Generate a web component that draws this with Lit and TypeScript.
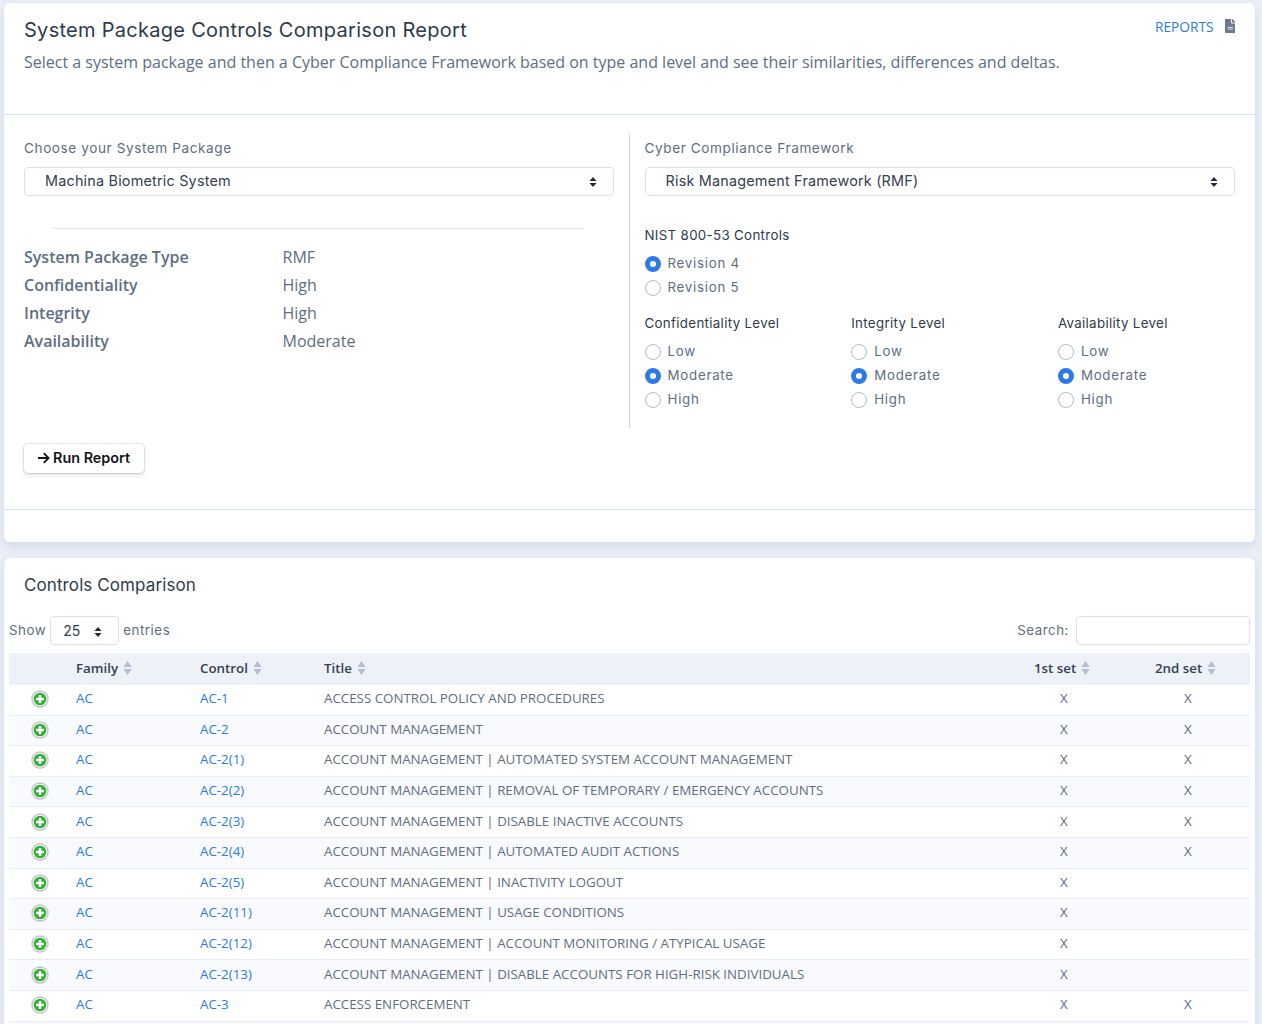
import { LitElement, html, css, svg } from "lit";
import { customElement } from "lit/decorators.js";

const ROWS: [string, string, boolean][] = [
  ["AC-1", "ACCESS CONTROL POLICY AND PROCEDURES", true],
  ["AC-2", "ACCOUNT MANAGEMENT", true],
  ["AC-2(1)", "ACCOUNT MANAGEMENT | AUTOMATED SYSTEM ACCOUNT MANAGEMENT", true],
  ["AC-2(2)", "ACCOUNT MANAGEMENT | REMOVAL OF TEMPORARY / EMERGENCY ACCOUNTS", true],
  ["AC-2(3)", "ACCOUNT MANAGEMENT | DISABLE INACTIVE ACCOUNTS", true],
  ["AC-2(4)", "ACCOUNT MANAGEMENT | AUTOMATED AUDIT ACTIONS", true],
  ["AC-2(5)", "ACCOUNT MANAGEMENT | INACTIVITY LOGOUT", false],
  ["AC-2(11)", "ACCOUNT MANAGEMENT | USAGE CONDITIONS", false],
  ["AC-2(12)", "ACCOUNT MANAGEMENT | ACCOUNT MONITORING / ATYPICAL USAGE", false],
  ["AC-2(13)", "ACCOUNT MANAGEMENT | DISABLE ACCOUNTS FOR HIGH-RISK INDIVIDUALS", false],
  ["AC-3", "ACCESS ENFORCEMENT", true],
];

const caret = svg`<svg class="caret" viewBox="0 0 8 12" width="8" height="12"><path d="M4 1 7.6 5H.4zM4 11 .4 7h7.2z" fill="#222b3c"/></svg>`;
const sort = svg`<svg class="sort" viewBox="0 0 9 14" width="9" height="14"><path d="M4.5 0 8.6 6H.4zM4.5 14 .4 8h8.2z" fill="#b5bfd1"/></svg>`;
const plus = svg`<svg class="plus" viewBox="0 0 18 18" width="18" height="18"><circle cx="9" cy="9" r="8" fill="#fff" stroke="#c4c4c4" stroke-width="1.4"/><circle cx="9" cy="9" r="6.300" fill="#2db133"/><path d="M9 5v8M5 9h8" stroke="#fff" stroke-width="2.600"/></svg>`;
const fileIcon = svg`<svg class="file" viewBox="0 0 384 512" width="10.5" height="14"><path fill="#6e7a92" d="M224 136V0H24C10.700 0 0 10.700 0 24v464c0 13.300 10.700 24 24 24h336c13.300 0 24-10.700 24-24V160H248c-13.200 0-24-10.800-24-24zm64 236c0 6.600-5.400 12-12 12H108c-6.600 0-12-5.400-12-12v-8c0-6.600 5.400-12 12-12h168c6.600 0 12 5.400 12 12zm0-64c0 6.600-5.400 12-12 12H108c-6.600 0-12-5.400-12-12v-8c0-6.600 5.400-12 12-12h168c6.600 0 12 5.400 12 12zM384 121.900V128H256V0h6.100c6.400 0 12.500 2.500 17 7l97.900 98c4.500 4.500 7 10.600 7 16.900z"/></svg>`;
const arrow = svg`<svg class="arrow" viewBox="0 0 13 12" width="13" height="12"><path d="M1 6h10.500M6.800 1.200 11.600 6l-4.800 4.800" fill="none" stroke="#12151c" stroke-width="1.800"/></svg>`;

@customElement("app-root")
export class AppRoot extends LitElement {
  static styles = css`
    :host {
      display: flex;
      flex-direction: column;
      gap: 16px;
      box-sizing: border-box;
      height: 1024px;
      overflow: hidden;
      padding: 3px 7px 0 4px;
      background: #e9eef7;
      font-family: "Open Sans", sans-serif;
      color: #5e6e82;
    }
    .card {
      background: #fff;
      border-radius: 6px;
      box-shadow: 0 4px 10px rgba(65, 80, 120, 0.12);
      flex: none;
    }
    .head {
      height: 112px;
      box-sizing: border-box;
      border-bottom: 1px solid #d8e2ef;
      padding: 16px 20px 0;
      position: relative;
    }
    h1 {
      margin: 0;
      font: 400 20px/23px "Inter", sans-serif;
      color: #2f3b4b;
      letter-spacing: 0.28px;
    }
    .desc {
      margin: 8px 0 0;
      font-size: 16px;
      line-height: 24px;
      color: #5e6e82;
    }
    .reports {
      position: absolute;
      top: 16px;
      right: 20px;
      display: flex;
      align-items: center;
      gap: 11px;
      height: 14px;
      font-size: 13.700px;
      color: #2c7be5;
    }
    .form {
      height: 395px;
      box-sizing: border-box;
      border-bottom: 1px solid #d8e2ef;
      padding: 20px 20px 0;
    }
    .cols {
      display: grid;
      grid-template-columns: 590px minmax(0, 1fr);
      height: 293px;
    }
    .right {
      margin-left: 15px;
      border-left: 1px solid #c9cfd9;
      padding-left: 14.500px;
    }
    .label {
      font: 400 13.600px/20px "Inter", sans-serif;
      color: #5e6e82;
      letter-spacing: 0.58px;
      margin-top: 3px;
    }
    .select {
      display: flex;
      align-items: center;
      justify-content: space-between;
      box-sizing: border-box;
      height: 29px;
      margin-top: 9px;
      padding: 0 16px 2px 20px;
      border: 1px solid #d8e2ef;
      border-radius: 4px;
      font: 400 14.400px/20px "Inter", sans-serif;
      letter-spacing: 0.2px;
      color: #344050;
    }
    .caret {
      position: relative;
      top: 1px;
    }
    hr {
      margin: 32px 30px 0 29px;
      border: 0;
      border-top: 1px solid #dfe4ec;
    }
    .info {
      display: grid;
      grid-template-columns: 258.500px 1fr;
      grid-auto-rows: 28px;
      align-items: center;
      margin-top: 14px;
      font-size: 16px;
    }
    .info b {
      font-weight: 600;
    }
    .group-title {
      font: 400 13.300px/20px "Inter", sans-serif;
      color: #2f3b4b;
      letter-spacing: 0.33px;
    }
    .nist {
      margin-top: 29px;
    }
    .radios {
      display: flex;
      flex-direction: column;
      gap: 4px;
      margin-top: 8px;
    }
    .radio {
      display: flex;
      align-items: center;
      gap: 7px;
      height: 20px;
      font: 400 13.300px/20px "Inter", sans-serif;
      color: #5e6e82;
      letter-spacing: 0.75px;
    }
    .dot {
      box-sizing: border-box;
      width: 16px;
      height: 16px;
      margin-top: 1px;
      border: 1px solid #b1bccd;
      border-radius: 50%;
      background: #fff;
      flex: none;
    }
    .dot.on {
      border: 5px solid #2c7be5;
    }
    .levels {
      display: grid;
      grid-template-columns: repeat(3, 206.700px);
      margin-top: 16px;
    }
    .run {
      display: inline-flex;
      align-items: center;
      gap: 3px;
      box-sizing: border-box;
      height: 29px;
      margin: 16px 0 0;
      padding: 0 14px 2px 13px;
      border: 0;
      border-radius: 4px;
      background: #fff;
      box-shadow: 0 0 0 1px rgba(43, 45, 80, 0.1), 0 2px 5px rgba(43, 45, 80, 0.12), 0 1px 1.500px rgba(0, 0, 0, 0.07);
      font: 600 14.400px/20px "Inter", sans-serif;
      color: #12151c;
    }
    .foot {
      height: 32px;
    }
    .card2 {
      flex: 1;
      border-radius: 6px 6px 0 0;
      padding: 0 5px;
    }
    h2 {
      margin: 0;
      padding: 16px 15px 0;
      font: 400 17px/22px "Inter", sans-serif;
      color: #2f3b4b;
      letter-spacing: 0.1px;
    }
    .tools {
      display: flex;
      justify-content: space-between;
      margin-top: 20px;
      height: 29px;
      font: 400 13.300px/29px "Inter", sans-serif;
      letter-spacing: 0.55px;
    }
    .tools > div {
      display: flex;
      align-items: center;
    }
    .len {
      display: flex;
      align-items: center;
      justify-content: space-between;
      box-sizing: border-box;
      width: 69px;
      height: 29px;
      margin: 0 4px;
      padding: 0 16px 0 12px;
      border: 1px solid #d8e2ef;
      border-radius: 4px;
      font-size: 14px;
      letter-spacing: 0;
      color: #344050;
    }
    .search {
      box-sizing: border-box;
      width: 174px;
      height: 29px;
      margin-left: 7px;
      border: 1px solid #d8e2ef;
      border-radius: 4px;
    }
    .table {
      margin-top: 8px;
      font-size: 13.340px;
    }
    .row {
      display: grid;
      grid-template-columns: 55px 124px 124px 710px 121px 107px;
      align-items: center;
      box-sizing: border-box;
      height: 30.600px;
      border-bottom: 1px solid #e9eef6;
    }
    .row.alt {
      background: #f9fafd;
    }
    .row > * {
      padding-left: 12px;
      padding-bottom: 3px;
    }
    .row.th {
      height: 32px;
      background: #edf2f9;
      border: 0;
      font-weight: 600;
      color: #344050;
    }
    .row.th > * {
      padding-bottom: 2px;
    }
    .th span {
      display: flex;
      align-items: center;
      gap: 5px;
    }
    .row a {
      color: #2c7be5;
      text-decoration: none;
    }
    .row .ic {
      padding-left: 22px;
      padding-bottom: 1px;
      display: flex;
    }
    .row .x1 {
      padding-left: 38px;
    }
    .row .x2 {
      padding-left: 41px;
    }
  `;

  private radio(label: string, on = false) {
    return html`<div class="radio"><span class="dot ${on ? "on" : ""}"></span>${label}</div>`;
  }

  private level(title: string) {
    return html`<div>
      <div class="group-title">${title}</div>
      <div class="radios">
        ${this.radio("Low")}${this.radio("Moderate", true)}${this.radio("High")}
      </div>
    </div>`;
  }

  render() {
    return html`
      <section class="card">
        <div class="head">
          <h1>System Package Controls Comparison Report</h1>
          <p class="desc">Select a system package and then a Cyber Compliance Framework based on type and level and see their similarities, differences and deltas.</p>
          <div class="reports">REPORTS ${fileIcon}</div>
        </div>
        <div class="form">
          <div class="cols">
            <div>
              <div class="label">Choose your System Package</div>
              <div class="select">Machina Biometric System ${caret}</div>
              <hr />
              <div class="info">
                <b>System Package Type</b><span>RMF</span>
                <b>Confidentiality</b><span>High</span>
                <b>Integrity</b><span>High</span>
                <b>Availability</b><span>Moderate</span>
              </div>
            </div>
            <div class="right">
              <div class="label">Cyber Compliance Framework</div>
              <div class="select">Risk Management Framework (RMF) ${caret}</div>
              <div class="group-title nist">NIST 800-53 Controls</div>
              <div class="radios">${this.radio("Revision 4", true)}${this.radio("Revision 5")}</div>
              <div class="levels">
                ${this.level("Confidentiality Level")}${this.level("Integrity Level")}${this.level("Availability Level")}
              </div>
            </div>
          </div>
          <button class="run">${arrow} Run Report</button>
        </div>
        <div class="foot"></div>
      </section>
      <section class="card card2">
        <h2>Controls Comparison</h2>
        <div class="tools">
          <div>Show <span class="len">25 ${caret}</span> entries</div>
          <div>Search: <span class="search"></span></div>
        </div>
        <div class="table">
          <div class="row th">
            <span></span>
            <span>Family ${sort}</span>
            <span>Control ${sort}</span>
            <span>Title ${sort}</span>
            <span>1st set ${sort}</span>
            <span>2nd set ${sort}</span>
          </div>
          ${ROWS.map(
            ([c, t, second], i) => html`<div class="row ${i % 2 ? "alt" : ""}">
              <span class="ic">${plus}</span>
              <span><a href="#">AC</a></span>
              <span><a href="#">${c}</a></span>
              <span>${t}</span>
              <span class="x1">X</span>
              <span class="x2">${second ? "X" : ""}</span>
            </div>`
          )}
          <div class="row alt"></div>
        </div>
      </section>
    `;
  }
}
